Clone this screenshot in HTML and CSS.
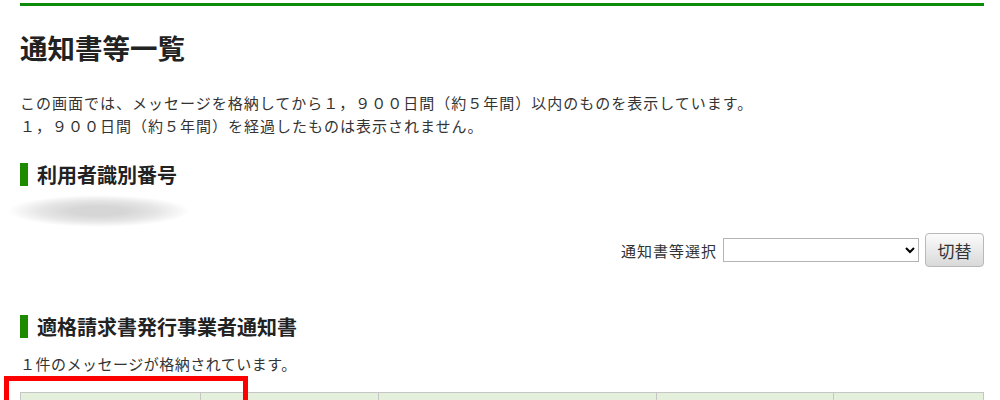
FILE: index.html
```html
<!DOCTYPE html>
<html lang="ja">

<head>
    <meta charset="UTF-8" />
    <meta name="viewport" content="width=device-width, initial-scale=1.0" />
    <title>通知書等一覧</title>
    <link rel="stylesheet" href="styles.css">
</head>

<body>
    <div class="page">
        <h1 class="title">通知書等一覧</h1>

        <p class="lead">
            この画面では、メッセージを格納してから１，９００日間（約５年間）以内のものを表示しています。<br>
            １，９００日間（約５年間）を経過したものは表示されません。
        </p>

        <h2 class="section">利用者識別番号</h2>
        <div class="masked"></div>

        <form class="switcher" onsubmit="return false">
            <label for="docType">通知書等選択</label>
            <select id="docType">
                <option></option>
            </select>
            <button type="submit">切替</button>
        </form>

        <h2 class="section section-2">適格請求書発行事業者通知書</h2>
        <p class="count">１件のメッセージが格納されています。</p>

        <table class="list">
            <tr>
                <th class="c1"></th>
                <th class="c2"></th>
                <th class="c3"></th>
                <th class="c4"></th>
                <th class="c5"></th>
            </tr>
        </table>
    </div>

    <div class="mark"></div>
</body>

</html>
```

FILE: styles.css
```css
* {
    box-sizing: border-box;
    margin: 0;
    padding: 0;
}

body {
    font-family: "Noto Sans CJK JP", "Noto Sans", sans-serif;
    background: #fff;
    color: #333;
    overflow: hidden;
}

.page {
    margin: 3px 16px 0 20px;
    border-top: 3px solid #0b8c0b;
}

.title {
    margin-top: 26px;
    font-size: 27.5px;
    line-height: 30px;
    font-weight: bold;
    color: #222;
}

.lead {
    margin-top: 29px;
    font-size: 15px;
    line-height: 23px;
    letter-spacing: 1px;
}

.section {
    margin-top: 26px;
    border-left: 8px solid #1e8a00;
    padding-left: 9px;
    font-size: 20px;
    line-height: 23px;
    font-weight: bold;
    color: #222;
}

.masked {
    margin: 9px 0 0 -12px;
    width: 182px;
    height: 32px;
    background: radial-gradient(ellipse closest-side, #d6d6d6 30%, #e6e6e6 65%, rgba(255, 255, 255, 0) 100%);
}

.switcher {
    margin-top: 6px;
    display: flex;
    justify-content: flex-end;
    align-items: center;
    gap: 6px;
}

.switcher label {
    font-size: 15px;
    letter-spacing: 1px;
    color: #333;
}

.switcher select {
    width: 196px;
    height: 24px;
    border: 1px solid #b4b4b4;
    background: #fff;
    font-size: 14px;
}

.switcher button {
    width: 59px;
    height: 34px;
    border: 1px solid #b8b8b8;
    border-radius: 4px;
    background: linear-gradient(to bottom, #fbfbfb, #d9d9d9);
    font-family: inherit;
    font-size: 17px;
    color: #333;
    cursor: pointer;
}

.section-2 {
    margin-top: 48px;
}

.count {
    margin-top: 14px;
    font-size: 15px;
    line-height: 23px;
    letter-spacing: 0.5px;
}

.list {
    margin-top: 17px;
    width: 964px;
    border-collapse: collapse;
}

.list th {
    height: 40px;
    background: #e4f0dc;
    border: 1px solid #c6c6c6;
}

.c1 { width: 180px; }
.c2 { width: 178px; }
.c3 { width: 279px; }
.c4 { width: 177px; }
.c5 { width: 150px; }

/* annotation drawn over the screenshot */
.mark {
    position: absolute;
    left: 4px;
    top: 376px;
    width: 244px;
    height: 24px;
    border: 5px solid #f00;
    border-bottom: 0;
}
```
